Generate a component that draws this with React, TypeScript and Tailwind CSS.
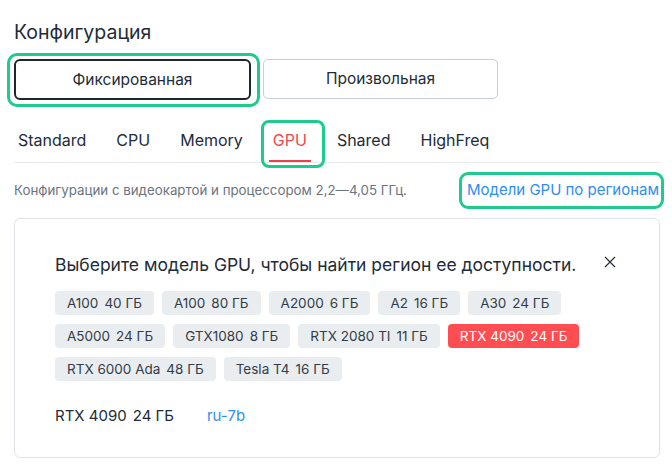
import React from "react";

const chips: [string, string][][] = [
  [["A100", "40 ГБ"], ["A100", "80 ГБ"], ["A2000", "6 ГБ"], ["A2", "16 ГБ"], ["A30", "24 ГБ"]],
  [["A5000", "24 ГБ"], ["GTX1080", "8 ГБ"], ["RTX 2080 TI", "11 ГБ"], ["RTX 4090", "24 ГБ"]],
  [["RTX 6000 Ada", "48 ГБ"], ["Tesla T4", "16 ГБ"]],
];

const tabs = ["Standard", "CPU", "Memory", "GPU", "Shared", "HighFreq"];

export default function App() {
  return (
    <div
      className="w-[672px] h-[471px] bg-white pl-[14px] pr-[12px] pt-[20px] text-[#222c38] overflow-hidden"
      style={{ fontFamily: "Inter, 'Noto Sans', sans-serif" }}
    >
      <h1 className="text-[19.5px] leading-[24px] font-normal">Конфигурация</h1>

      <div className="flex gap-[12px] mt-[15px]">
        <div className="relative">
          <div className="absolute -left-[7px] -top-[6px] -right-[9px] -bottom-[7px] border-[3px] border-[#1ecb8c] rounded-[10px]" />
          <button className="relative w-[237px] h-[41px] border-2 border-[#1c2531] rounded-[6px] text-[15.5px] text-[#222c38] bg-white">
            Фиксированная
          </button>
        </div>
        <button className="w-[235px] h-[40px] border border-[#c9ced4] rounded-[5px] text-[15.5px] text-[#222c38] bg-white">
          Произвольная
        </button>
      </div>

      <div className="mt-[25px] flex gap-[22px] border-b border-[#e8eaed] h-[38px]">
        {tabs.map((t) => {
          const active = t === "GPU";
          return (
            <div
              key={t}
              className={`relative px-[4px] pt-[5px] text-[16px] leading-[20px] ${active ? "text-[#f0474d]" : "text-[#222c38]"}`}
            >
              {t}
              {active && (
                <>
                  <div className="absolute left-0 right-0 bottom-[0px] h-[2px] bg-[#ef3e45]" />
                  <div className="absolute -left-[8px] -right-[14px] -top-[5px] -bottom-[6px] border-[3px] border-[#1ecb8c] rounded-[8px]" />
                </>
              )}
            </div>
          );
        })}
      </div>

      <div className="flex items-center justify-between mt-[17px] pr-[1px]">
        <span className="text-[13.3px] leading-[20px] text-[#6b737d]">
          Конфигурации с видеокартой и процессором 2,2—4,05 ГГц.
        </span>
        <span className="relative text-[15px] leading-[20px] text-[#2f8df0]">
          Модели GPU по регионам
          <span className="absolute -left-[8px] -right-[5px] -top-[8px] -bottom-[9px] border-[3px] border-[#1ecb8c] rounded-[9px]" />
        </span>
      </div>

      <div className="mt-[18px] border border-[#dfe3e8] rounded-[6px] h-[240px] pl-[40px] pr-[40px] pt-[34px] relative">
        <div className="flex items-center justify-between">
          <span className="text-[17.5px] leading-[24px] text-[#222c38]">
            Выберите модель GPU, чтобы найти регион ее доступности.
          </span>
          <svg width="12" height="12" viewBox="0 0 12 12" className="mr-[3px] mt-[-7px]">
            <path d="M1 1L11 11M11 1L1 11" stroke="#2b3440" strokeWidth="1.3" />
          </svg>
        </div>

        <div className="mt-[14px] flex flex-col gap-[9px]">
          {chips.map((row, i) => (
            <div key={i} className="flex gap-[8px]">
              {row.map(([m, g]) => {
                const sel = m === "RTX 4090";
                return (
                  <span
                    key={m + g}
                    className={`h-[24px] px-[12px] rounded-[4px] flex items-center text-[13.5px] ${sel ? "bg-[#ff4d52] text-white" : "bg-[#e9edf0] text-[#333c47]"}`}
                  >
                    <span>{m}</span>
                    <span className="ml-[6px]">{g}</span>
                  </span>
                );
              })}
            </div>
          ))}
        </div>

        <div className="mt-[25px] flex items-center text-[15px] leading-[20px]">
          <span className="text-[#222c38]">
            RTX 4090<span className="ml-[6px]">24 ГБ</span>
          </span>
          <span className="ml-[33px] text-[#2f8df0]">ru-7b</span>
        </div>
      </div>
    </div>
  );
}
